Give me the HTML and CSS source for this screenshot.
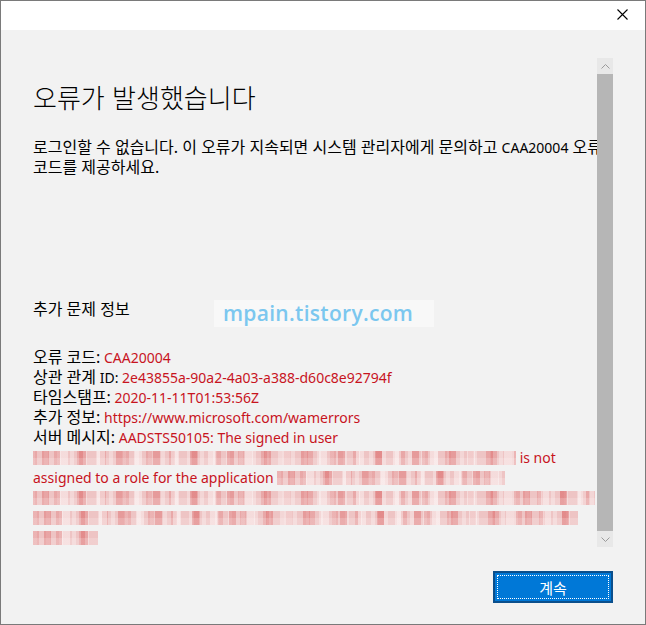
FILE: index.html
```html
<!DOCTYPE html>
<html lang="ko">
<head>
<meta charset="utf-8">
<title>오류</title>
<link rel="stylesheet" href="styles.css">
</head>
<body>
<div class="window">
  <div class="titlebar">
    <button class="close" aria-label="닫기">
      <svg width="11" height="11" viewBox="0 0 11 11"><path d="M0.5 0.5 L10.5 10.5 M10.5 0.5 L0.5 10.5" stroke="#000" stroke-width="1.1" fill="none"/></svg>
    </button>
  </div>
  <div class="body">
    <div class="scrollview">
      <div class="content">
        <h1 class="title">오류가 발생했습니다</h1>
        <p class="message">로그인할 수 없습니다. 이 오류가 지속되면 시스템 관리자에게 문의하고 <span class="latin">CAA20004</span> 오류<br>코드를 제공하세요.</p>
        <h2 class="section">추가 문제 정보</h2>
        <div class="details">
          <div class="line"><span class="ko">오류 코드:</span> <span class="red">CAA20004</span></div>
          <div class="line"><span class="ko">상관 관계</span> ID: <span class="red">2e43855a-90a2-4a03-a388-d60c8e92794f</span></div>
          <div class="line"><span class="ko">타임스탬프:</span> <span class="red">2020-11-11T01:53:56Z</span></div>
          <div class="line"><span class="ko">추가 정보:</span> <span class="red">https://www.microsoft.com/wamerrors</span></div>
          <div class="line"><span class="ko">서버 메시지:</span> <span class="red">AADSTS50105: The signed in user</span></div>
          <div class="line"><span class="blur b1"></span> <span class="red">is not</span></div>
          <div class="line"><span class="red">assigned to a role for the application</span> <span class="blur b2"></span></div>
          <div class="line"><span class="blur b3"></span></div>
          <div class="line"><span class="blur b4"></span></div>
          <div class="line"><span class="blur b5"></span></div>
        </div>
        <div class="watermark">mpain.tistory.com</div>
      </div>
      <div class="scrollbar">
        <div class="arrow up"><svg width="9" height="5" viewBox="0 0 9 5"><path d="M0.5 4.5 L4.5 0.5 L8.5 4.5" stroke="#9a9a9a" fill="none"/></svg></div>
        <div class="thumb"></div>
        <div class="arrow down"><svg width="9" height="5" viewBox="0 0 9 5"><path d="M0.5 0.5 L4.5 4.5 L8.5 0.5" stroke="#9a9a9a" fill="none"/></svg></div>
      </div>
    </div>
    <div class="footer">
      <button class="continue">계속</button>
    </div>
  </div>
</div>
</body>
</html>
```

FILE: styles.css
```css
* { box-sizing: border-box; }
html, body { margin: 0; padding: 0; }
body {
  width: 646px;
  height: 625px;
  font-family: "Noto Sans", "Noto Sans CJK KR", sans-serif;
  color: #000;
}
.window {
  width: 646px;
  height: 625px;
  border: 1px solid #7a7a7a;
  display: flex;
  flex-direction: column;
  background: #f2f2f2;
}
.titlebar {
  height: 29px;
  background: #fff;
  display: flex;
  justify-content: flex-end;
  align-items: center;
}
.close {
  width: 46px;
  height: 29px;
  border: 0;
  background: transparent;
  display: flex;
  align-items: center;
  justify-content: center;
  padding: 0 0 2px 0;
}
.body {
  flex: 1;
  display: flex;
  flex-direction: column;
  padding: 28px 32px 0 32px;
}
.scrollview {
  height: 489px;
  display: flex;
}
.content {
  flex: 1;
  overflow: hidden;
  position: relative;
  padding-top: 22px;
}
.title {
  margin: 0;
  font-family: "Noto Sans CJK KR", sans-serif;
  font-weight: 300;
  font-size: 26px;
  line-height: 34px;
  white-space: nowrap;
}
.message {
  margin: 23px 0 0 0;
  font-size: 16px;
  line-height: 20px;
  white-space: nowrap;
}
.latin { font-size: 14px; line-height: 1; }
.section {
  margin: 122px 0 0 0;
  font-size: 16px;
  font-weight: 400;
  line-height: 20px;
}
.details {
  margin-top: 29px;
  font-size: 14px;
  white-space: nowrap;
}
.line {
  height: 20px;
  line-height: 20px;
}
.ko { font-size: 16px; line-height: 1; }
.red { color: #c8141e; }
.blur {
  display: inline-block;
  height: 14px;
  vertical-align: -2px;
  background-color: #eec4c4;
  background-image:
    linear-gradient(0deg, rgba(255,255,255,0.18) 0 7px, rgba(0,0,0,0) 7px 14px),
    repeating-linear-gradient(90deg, rgba(0,0,0,0) 0 11px, rgba(220,105,105,0.45) 11px 18px, rgba(0,0,0,0) 18px 29px, rgba(255,255,255,0.4) 29px 37px),
    repeating-linear-gradient(90deg, rgba(222,115,115,0.35) 0 6px, rgba(0,0,0,0) 6px 23px),
    repeating-linear-gradient(90deg, rgba(255,255,255,0.3) 0 4px, rgba(0,0,0,0) 4px 13px);
}
.b1 { width: 485px; margin-left: -2px; }
.b2 { width: 228px; }
.b3 { width: 564px; margin-left: -2px; }
.b4 { width: 545px; }
.b5 { width: 65px; }
.watermark {
  position: absolute;
  left: 181px;
  top: 242px;
  width: 220px;
  height: 27px;
  background: #f8f8f8;
  color: #7bc7ef;
  font-family: "Open Sans", sans-serif;
  font-weight: 600;
  font-size: 21px;
  line-height: 27px;
  padding-left: 9px;
  letter-spacing: 0.3px;
}
.scrollbar {
  width: 16px;
  display: flex;
  flex-direction: column;
  background: #e8e8e8;
}
.arrow {
  height: 16px;
  display: flex;
  align-items: center;
  justify-content: center;
  background: #e8e8e8;
}
.thumb {
  flex: 1;
  background: #b6b6b6;
}
.footer {
  display: flex;
  justify-content: flex-end;
  padding-top: 24px;
}
.continue {
  width: 120px;
  height: 32px;
  background: #0078d7;
  border: 2px solid #0b4f8c;
  outline: 1px dotted #fff;
  outline-offset: -5px;
  color: #fff;
  font-family: "Noto Sans CJK KR", sans-serif;
  font-size: 15px;
  padding: 0;
}
```
